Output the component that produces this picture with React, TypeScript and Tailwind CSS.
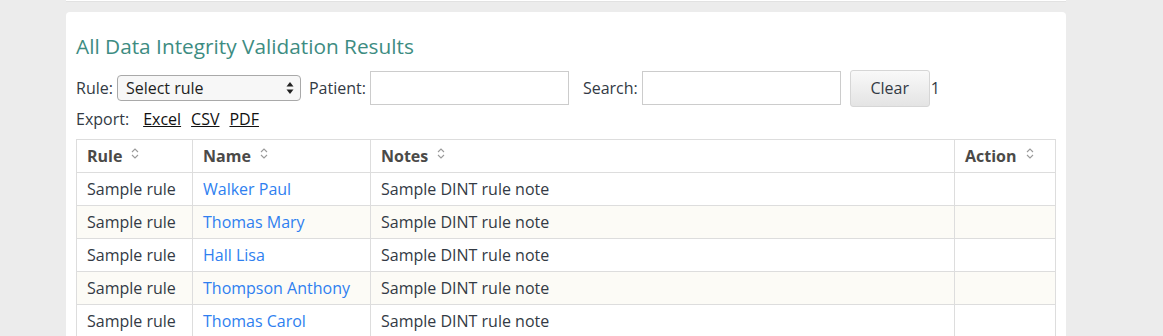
import React from "react";

const rows = [
  { rule: "Sample rule", name: "Walker Paul", notes: "Sample DINT rule note" },
  { rule: "Sample rule", name: "Thomas Mary", notes: "Sample DINT rule note" },
  { rule: "Sample rule", name: "Hall Lisa", notes: "Sample DINT rule note" },
  { rule: "Sample rule", name: "Thompson Anthony", notes: "Sample DINT rule note" },
  { rule: "Sample rule", name: "Thomas Carol", notes: "Sample DINT rule note" },
];

function SortIcon() {
  return (
    <svg width="8" height="11" viewBox="0 0 8 11" className="ml-[9px] inline-block align-[3px]">
      <path d="M1 4 L4 1 L7 4" fill="none" stroke="#9a9a9a" strokeWidth="1.1" />
      <path d="M1 7 L4 10 L7 7" fill="none" stroke="#9a9a9a" strokeWidth="1.1" />
    </svg>
  );
}

export default function App() {
  return (
    <div
      className="h-[336px] overflow-hidden bg-[#ececec] text-[#333a44]"
      style={{ fontFamily: '"Open Sans", "Liberation Sans", sans-serif' }}
    >
      <div className="ml-[66px] w-[1000px] h-[2px] bg-white border-b border-[#e2e2e2]" />
      <div className="ml-[66px] mt-[10px] w-[1000px] rounded-t-[4px] bg-white px-[10px] pt-[19px] h-[330px]">
        <h2 className="text-[20.8px] leading-[30px] text-[#3d8c82]">All Data Integrity Validation Results</h2>
        <div className="mt-[10px] flex items-center text-[16px] h-[34px]">
          <span>Rule:</span>
          <div className="ml-[4px] relative w-[184px] h-[26px] rounded-[4px] border border-[#a9a9a9] bg-[#f7f7f7] flex items-center pl-[8px] text-[16px] text-[#1e1e1e]">
            Select rule
            <svg width="8" height="14" viewBox="0 0 8 14" className="absolute right-[6px] top-[5px]">
              <path d="M0.5 5.5 L4 1 L7.5 5.5 Z" fill="#222" />
              <path d="M0.5 8.5 L4 13 L7.5 8.5 Z" fill="#222" />
            </svg>
          </div>
          <span className="ml-[8px]">Patient:</span>
          <div className="ml-[4px] w-[199px] h-[34px] border border-[#cccccc] bg-white" />
          <span className="ml-[14px]">Search:</span>
          <div className="ml-[4px] w-[199px] h-[34px] border border-[#cccccc] bg-white" />
          <button className="ml-[9px] w-[80px] h-[37px] rounded-[3px] border border-[#d6d6d6] bg-gradient-to-b from-[#f9f9f9] to-[#e4e4e4] text-[16px] text-[#333a44]">
            Clear
          </button>
          <span className="ml-[1px]">1</span>
        </div>
        <div className="mt-[2px] flex items-center text-[16px] h-[24px]">
          <span>Export:</span>
          <a className="ml-[14px] underline text-[#111]">Excel</a>
          <a className="ml-[10px] underline text-[#111]">CSV</a>
          <a className="ml-[10px] underline text-[#111]">PDF</a>
        </div>
        <table className="mt-[8px] w-[980px] border-collapse text-[16px]">
          <thead>
            <tr className="h-[33px]">
              <th className="w-[116px] border border-[#dddddd] px-[10px] text-left font-bold text-[#4b4a48]">Rule<SortIcon /></th>
              <th className="w-[178px] border border-[#dddddd] px-[10px] text-left font-bold text-[#4b4a48]">Name<SortIcon /></th>
              <th className="border border-[#dddddd] px-[10px] text-left font-bold text-[#4b4a48]">Notes<SortIcon /></th>
              <th className="w-[101px] border border-[#dddddd] px-[10px] text-left font-bold text-[#4b4a48]">Action<SortIcon /></th>
            </tr>
          </thead>
          <tbody>
            {rows.map((r, i) => (
              <tr key={i} className={i % 2 === 1 ? "h-[33px] bg-[#fcfbf6]" : "h-[33px] bg-white"}>
                <td className="border border-[#dddddd] px-[10px]">{r.rule}</td>
                <td className="border border-[#dddddd] px-[10px] text-[#2f7ff0]">{r.name}</td>
                <td className="border border-[#dddddd] px-[10px]">{r.notes}</td>
                <td className="border border-[#dddddd] px-[10px]"></td>
              </tr>
            ))}
          </tbody>
        </table>
      </div>
    </div>
  );
}
